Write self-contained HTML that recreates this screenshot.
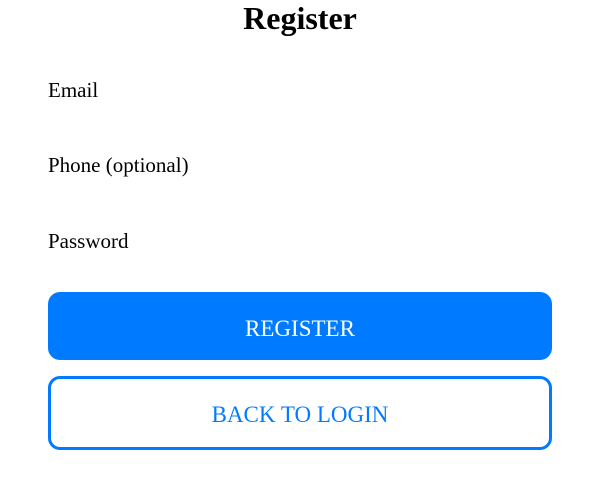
<!DOCTYPE html>
<html><head><style>
body{margin:0;width:600px;height:496px;background:#fff;font-family:"Liberation Serif",serif;position:relative;overflow:hidden}
.t{position:absolute;left:0;width:600px;top:-1px;text-align:center;font-size:32px;font-weight:bold;line-height:38px}
.l{position:absolute;left:48px;font-size:21px;line-height:24px}
.b{position:absolute;left:48px;width:504px;box-sizing:border-box;border-radius:12px;display:flex;align-items:center;justify-content:center;font-size:23px}
</style></head><body>
<div class="t">Register</div>
<div class="l" style="top:78px">Email</div>
<div class="l" style="top:153px">Phone (optional)</div>
<div class="l" style="top:229px">Password</div>
<div class="b" style="top:292px;height:68px;background:#007bff;color:#fff;padding-top:5px">REGISTER</div>
<div class="b" style="top:376px;height:74px;border:3px solid #007bff;color:#007bff;padding-top:4px">BACK TO LOGIN</div>
</body></html>
